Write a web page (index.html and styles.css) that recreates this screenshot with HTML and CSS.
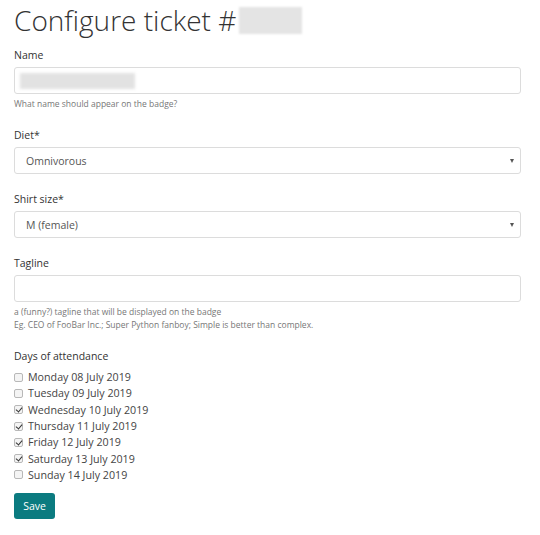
FILE: index.html
```html
<!DOCTYPE html>
<html>
<head>
<meta charset="utf-8">
<link rel="stylesheet" href="styles.css">
</head>
<body>
<div class="page">
  <h1 class="title">Configure ticket #<span class="blur-id"></span></h1>
  <form class="form">
    <div class="group">
      <label class="label">Name</label>
      <div class="control"><span class="blur-name"></span></div>
      <div class="help">What name should appear on the badge?</div>
    </div>
    <div class="group">
      <label class="label">Diet*</label>
      <div class="control select"><span>Omnivorous</span><span class="caret"></span></div>
    </div>
    <div class="group">
      <label class="label">Shirt size*</label>
      <div class="control select"><span>M (female)</span><span class="caret"></span></div>
    </div>
    <div class="group">
      <label class="label">Tagline</label>
      <div class="control"></div>
      <div class="help">a (funny?) tagline that will be displayed on the badge</div>
      <div class="help">Eg. CEO of FooBar Inc.; Super Python fanboy; Simple is better than complex.</div>
    </div>
    <div class="group days">
      <label class="label">Days of attendance</label>
      <ul class="checks">
        <li><span class="box"></span>Monday 08 July 2019</li>
        <li><span class="box"></span>Tuesday 09 July 2019</li>
        <li><span class="box on"></span>Wednesday 10 July 2019</li>
        <li><span class="box on"></span>Thursday 11 July 2019</li>
        <li><span class="box on"></span>Friday 12 July 2019</li>
        <li><span class="box on"></span>Saturday 13 July 2019</li>
        <li><span class="box"></span>Sunday 14 July 2019</li>
      </ul>
    </div>
    <div class="btn">Save</div>
  </form>
</div>
</body>
</html>
```
FILE: styles.css
```css
* { box-sizing: border-box; }
body {
  margin: 0;
  background: #fff;
  font-family: "Open Sans", "Noto Sans", sans-serif;
  color: #333;
}
.page { padding: 0 19px 0 14px; }
.title {
  margin: 0;
  padding-top: 1px;
  font-size: 28px;
  font-weight: 300;
  line-height: 38px;
  color: #333;
  display: flex;
  align-items: center;
}
.blur-id {
  display: inline-block;
  width: 63px;
  height: 27px;
  margin-left: 3px;
  background: #e4e4e4;
  filter: blur(1px);
}
.form { display: flex; flex-direction: column; }
.group { display: flex; flex-direction: column; margin-bottom: 9px; }
.label {
  font-size: 10.5px;
  line-height: 16px;
  color: #333;
  margin-top: 8px;
  margin-bottom: 4px;
}
.control {
  height: 27px;
  border: 1px solid #dcdcdc;
  border-radius: 3px;
  display: flex;
  align-items: center;
  padding: 0 11px;
  font-size: 10.5px;
  color: #555;
}
.select { justify-content: space-between; padding-right: 6px; }
.caret {
  width: 0; height: 0;
  border-left: 2.5px solid transparent;
  border-right: 2.5px solid transparent;
  border-top: 4px solid #555;
}
.blur-name {
  display: inline-block;
  width: 115px;
  height: 16px;
  margin-left: -6px;
  background: #e2e2e2;
  filter: blur(1.5px);
}
.help {
  font-size: 8.5px;
  line-height: 13px;
  color: #777;
}
.group .control + .help { margin-top: 3px; }
.days .label { margin-bottom: 5px; }
.checks { list-style: none; margin: 0; padding: 0; }
.checks li {
  display: flex;
  align-items: center;
  height: 16.3px;
  font-size: 10.7px;
  color: #444;
}
.box {
  width: 9px; height: 9px;
  border: 1px solid #b8b8b8;
  border-radius: 2px;
  background: #f4f4f4;
  margin-right: 5px;
  position: relative;
}
.box.on::after {
  content: "";
  position: absolute;
  left: 2px; top: 0px;
  width: 3px; height: 5px;
  border-right: 1.5px solid #333;
  border-bottom: 1.5px solid #333;
  transform: rotate(40deg);
}
.btn {
  align-self: flex-start;
  margin-top: 1px;
  width: 41px;
  height: 26px;
  background: #0b7b80;
  color: #fff;
  border-radius: 3px;
  font-size: 10.5px;
  display: flex;
  align-items: center;
  justify-content: center;
}
```
